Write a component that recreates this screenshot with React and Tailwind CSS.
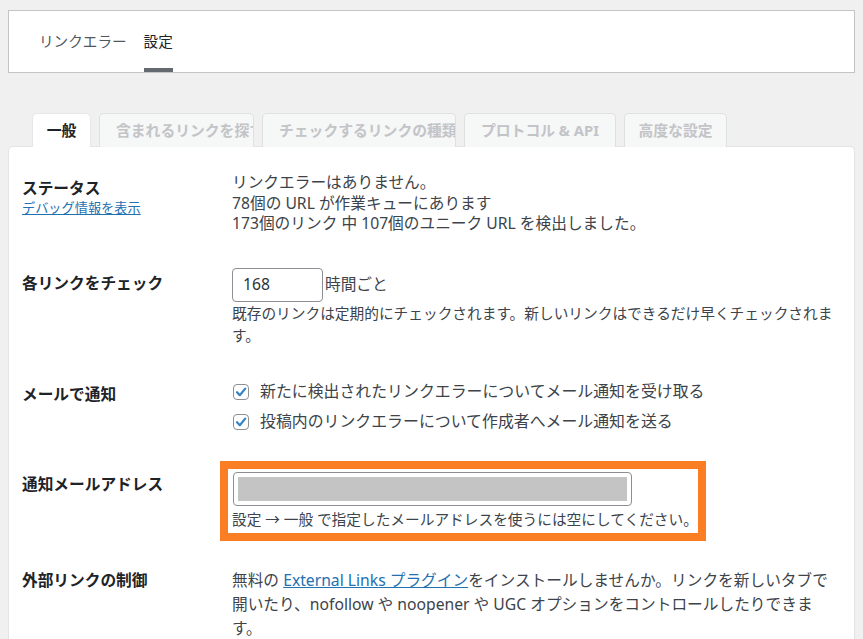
import React from "react";

const font = {
  fontFamily: '"Noto Sans", "Noto Sans CJK JP", sans-serif',
};

function CheckBox() {
  return (
    <span className="flex h-4 w-4 shrink-0 items-center justify-center rounded-[4px] border border-[#8c8f94] bg-white">
      <svg width="14" height="14" viewBox="0 0 14 14" fill="none">
        <path
          d="M3 7.2 L5.8 10.2 L11.2 3.6"
          stroke="#3582c4"
          strokeWidth="2.2"
          strokeLinecap="round"
          strokeLinejoin="round"
        />
      </svg>
    </span>
  );
}

function Row({ label, labelPad, extra, className, children }) {
  return (
    <div className={"flex " + (className || "")}>
      <div className={"w-[210px] shrink-0 " + labelPad}>
        <h2 className="text-[15.7px] font-bold leading-[20px] text-[#1d2327]">{label}</h2>
        {extra}
      </div>
      <div className="w-[610px] text-[15.7px] text-[#3c434a]">{children}</div>
    </div>
  );
}

export default function App() {
  const tabs = [
    { name: "一般", w: "w-[59px]", active: true },
    { name: "含まれるリンクを探す", w: "w-[155px]", cut: true },
    { name: "チェックするリンクの種類", w: "w-[194px]", cut: true },
    { name: "プロトコル & API", w: "w-[152px]" },
    { name: "高度な設定", w: "w-[103px]" },
  ];

  return (
    <div className="min-h-screen bg-[#f0f0f1] px-2 pt-[10px]" style={font}>
      {/* top nav */}
      <div className="flex h-[63px] gap-[17px] border border-[#c3c4c7] bg-white pl-[30px]">
        <div className="h-full pt-[20px] text-[14.6px] leading-[20px] text-[#50575e]">リンクエラー</div>
        <div className="h-full border-b-4 border-[#646970] pt-[20px] text-[14.6px] leading-[20px] text-[#1d2327]">
          設定
        </div>
      </div>

      {/* tabs */}
      <div className="mt-[40px] flex gap-2 pl-[24px]">
        {tabs.map((t) => (
          <div
            key={t.name}
            className={
              "relative -mb-px flex h-[34px] items-center overflow-hidden whitespace-nowrap rounded-t-[5px] border border-b-0 text-[14.8px] font-bold " +
              t.w +
              (t.cut ? " justify-start pl-[16px]" : " justify-center") +
              (t.active
                ? " z-10 border-[#e6e7e8] bg-white text-[#1d2327]"
                : " border-[#e0e0e0] bg-[#f6f7f7] text-[#c3c4c7]")
            }
          >
            {t.name}
          </div>
        ))}
      </div>

      {/* panel */}
      <div className="rounded-t-[5px] border border-b-0 border-[#e2e4e7] bg-white pb-6 pl-[13px] pt-[25px]">
        <Row
          label="ステータス"
          labelPad="pt-[6px]"
          extra={
            <a className="block text-[13.2px] leading-[20px] text-[#2271b1] underline" href="#">
              デバッグ情報を表示
            </a>
          }
        >
          <div className="leading-[20.5px]">
            <div>リンクエラーはありません。</div>
            <div>78個の URL が作業キューにあります</div>
            <div>173個のリンク 中 107個のユニーク URL を検出しました。</div>
          </div>
        </Row>

        <Row label="各リンクをチェック" labelPad="pt-[5px]" className="mt-[34px]">
          <div className="flex items-center">
            <div className="flex h-[34px] w-[91px] items-center rounded-[4px] border border-[#8c8f94] pl-[10px] text-[#2c3338]">
              168
            </div>
            <span className="ml-[2px]">時間ごと</span>
          </div>
          <p className="text-[14.7px] leading-[22px]">
            既存のリンクは定期的にチェックされます。新しいリンクはできるだけ早くチェックされます。
          </p>
        </Row>

        <Row label="メールで通知" labelPad="pt-[7px]" className="mt-[31px]">
          <label className="flex h-[30px] items-center gap-[11px] pl-px text-[15.9px]">
            <CheckBox />
            新たに検出されたリンクエラーについてメール通知を受け取る
          </label>
          <label className="flex h-[30px] items-center gap-[11px] pl-px text-[15.9px]">
            <CheckBox />
            投稿内のリンクエラーについて作成者へメール通知を送る
          </label>
        </Row>

        <Row label="通知メールアドレス" labelPad="pt-[13px]" className="mt-[24px]">
          <div className="-ml-[12px] w-[486px] border-[8px] border-[#fb7e24] bg-white pb-[3px] pl-[5px] pt-[3px]">
            <div className="h-[34px] w-[399px] rounded-[4px] border border-[#8c8f94] p-[4px]">
              <div className="h-full w-full bg-[#c4c4c4]" />
            </div>
            <p className="mt-[2px] -ml-px text-[14.7px] leading-[22px]">
              設定 → 一般 で指定したメールアドレスを使うには空にしてください。
            </p>
          </div>
        </Row>

        <Row label="外部リンクの制御" labelPad="pt-[2px]" className="mt-[27px]">
          <p className="leading-[24px]">
            無料の{" "}
            <a href="#" className="text-[#2271b1] underline">
              External Links プラグイン
            </a>
            をインストールしませんか。リンクを新しいタブで開いたり、nofollow や noopener や UGC オプションをコントロールしたりできま
            <br />
            す。
          </p>
        </Row>
      </div>
    </div>
  );
}
